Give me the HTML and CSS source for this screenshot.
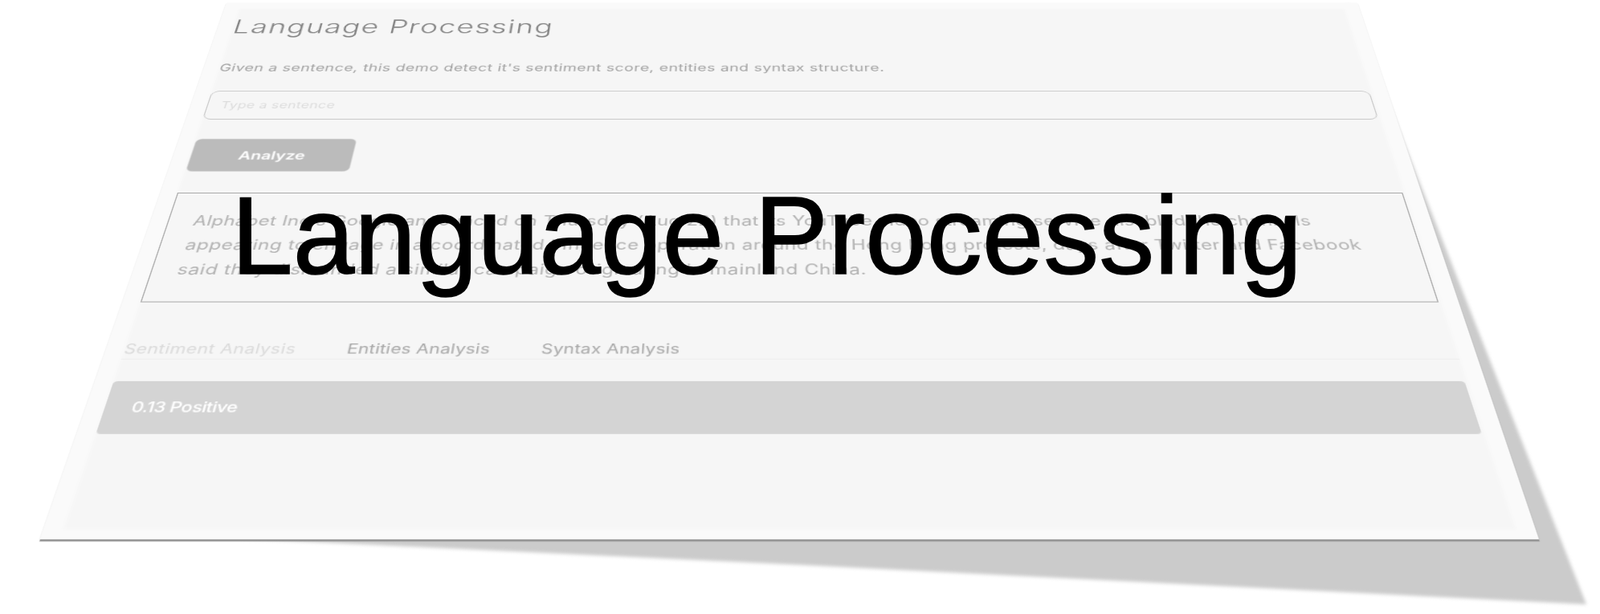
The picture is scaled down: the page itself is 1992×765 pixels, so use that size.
FILE: index.html
```html
<!DOCTYPE html>
<html lang="en">
<head>
<meta charset="utf-8">
<title>Language Processing</title>
<link rel="stylesheet" href="styles.css">
</head>
<body>
<div class="stage">
  <svg class="shadow" width="1992" height="765" viewBox="0 0 1992 765" aria-hidden="true">
    <polygon class="shadow-shape" points="1680,6 1975,753 1000,704 300,671 800,400"/>
  </svg>
  <main class="card">
    <h2 class="title">Language Processing</h2>
    <p class="lead">Given a sentence, this demo detect it's sentiment score, entities and syntax structure.</p>
    <div class="field">Type a sentence</div>
    <button class="analyze" type="button">Analyze</button>
    <div class="sample">
      <p class="sample-line sample-line-first">Alphabet Inc's Google announced on Thursday (Aug 22) that its YouTube video streaming service disabled the channels</p>
      <p class="sample-line">appearing to engage in a coordinated influence operation around the Hong Kong protests, days after Twitter and Facebook</p>
      <p class="sample-line sample-line-last">said they dismantled a similar campaign originating in mainland China.</p>
    </div>
    <nav class="tabs">
      <span class="tab tab-active">Sentiment Analysis</span>
      <span class="tab">Entities Analysis</span>
      <span class="tab">Syntax Analysis</span>
    </nav>
    <div class="result">0.13 Positive</div>
  </main>
  <h1 class="overlay-title">Language Processing</h1>
</div>
</body>
</html>
```
FILE: styles.css
```css
* { box-sizing: border-box; }
html, body { margin: 0; padding: 0; background: #fff; }
body { width: 1992px; height: 765px; overflow: hidden; font-family: "Inter", "Liberation Sans", sans-serif; }
.stage { position: relative; width: 1992px; height: 765px; overflow: hidden; }
.shadow { position: absolute; left: 0; top: 0; filter: blur(2px); }
.shadow-shape { fill: #cbcbcb; }
.card {
  position: absolute; left: 0; top: 0;
  width: 1200px; height: 700px;
  padding: 20px 16px 0;
  background: #f6f6f6;
  box-shadow: inset 16px 10px 3px #fafafa, inset -16px -10px 3px #fafafa, -0.4px 0 0.5px #cfcfcf, 0.4px 0 0.5px #ababab, 0 1.6px 0.6px #929292;
  transform-origin: 0 0;
  transform: matrix3d(1.17333,0,0,0, -0.34896,0.71866,0,-0.00035063, 0,0,1,0, 282,4,0,1);
}
.card > * { filter: blur(0.55px); }
.title { margin: 0; height: 40px; line-height: 40px; font-size: 31px; font-weight: 350; color: #858585; letter-spacing: 1.2px; }
.lead { margin: 35px 0 0; height: 24px; line-height: 24px; font-size: 16px; font-weight: 400; color: #a3a3a3; letter-spacing: 0.36px; white-space: nowrap; }
.field { margin: 25px 2px 0 0; height: 44px; line-height: 42px; padding-left: 13px; border: 1px solid #c8c8c8; border-radius: 8px; font-size: 14px; font-weight: 400; color: #dcdcdc; letter-spacing: 0.3px; }
.analyze { display: block; margin: 29px 0 0 1px; width: 157px; height: 47px; border: 0; border-radius: 6px; background: #bbb; color: #fff; font: 600 16.5px "Inter", sans-serif; }
.sample { margin: 30px 2px 0 0; height: 144px; padding: 22px 23px 0; border: 1px solid #a8a8a8; }
.sample-line { margin: 0; height: 32px; line-height: 32px; font-size: 18px; font-weight: 400; color: #b2b2b2; letter-spacing: 0.38px; white-space: nowrap; }
.sample-line-first { letter-spacing: 0.24px; }
.sample-line-last { letter-spacing: 0.48px; }
.tabs { display: flex; gap: 45px; margin-top: 44px; height: 25px; line-height: 24px; border-bottom: 1px solid #efefef; }
.tab { font-size: 16px; font-weight: 400; color: #a8a8a8; letter-spacing: 0.15px; white-space: nowrap; }
.tab-active { color: #dadada; letter-spacing: 0.35px; }
.result { margin: 25px 2px 0 0; height: 59px; line-height: 58px; padding-left: 23px; border-radius: 4px; background: #d4d4d4; color: #fff; font-size: 16px; font-weight: 500; letter-spacing: -0.35px; }
.overlay-title { position: absolute; left: 288px; top: 225px; margin: 0; font: 400 137.8px/1 "Liberation Sans", Arial, sans-serif; color: #000; -webkit-text-stroke: 1.5px #000; white-space: nowrap; }
```
